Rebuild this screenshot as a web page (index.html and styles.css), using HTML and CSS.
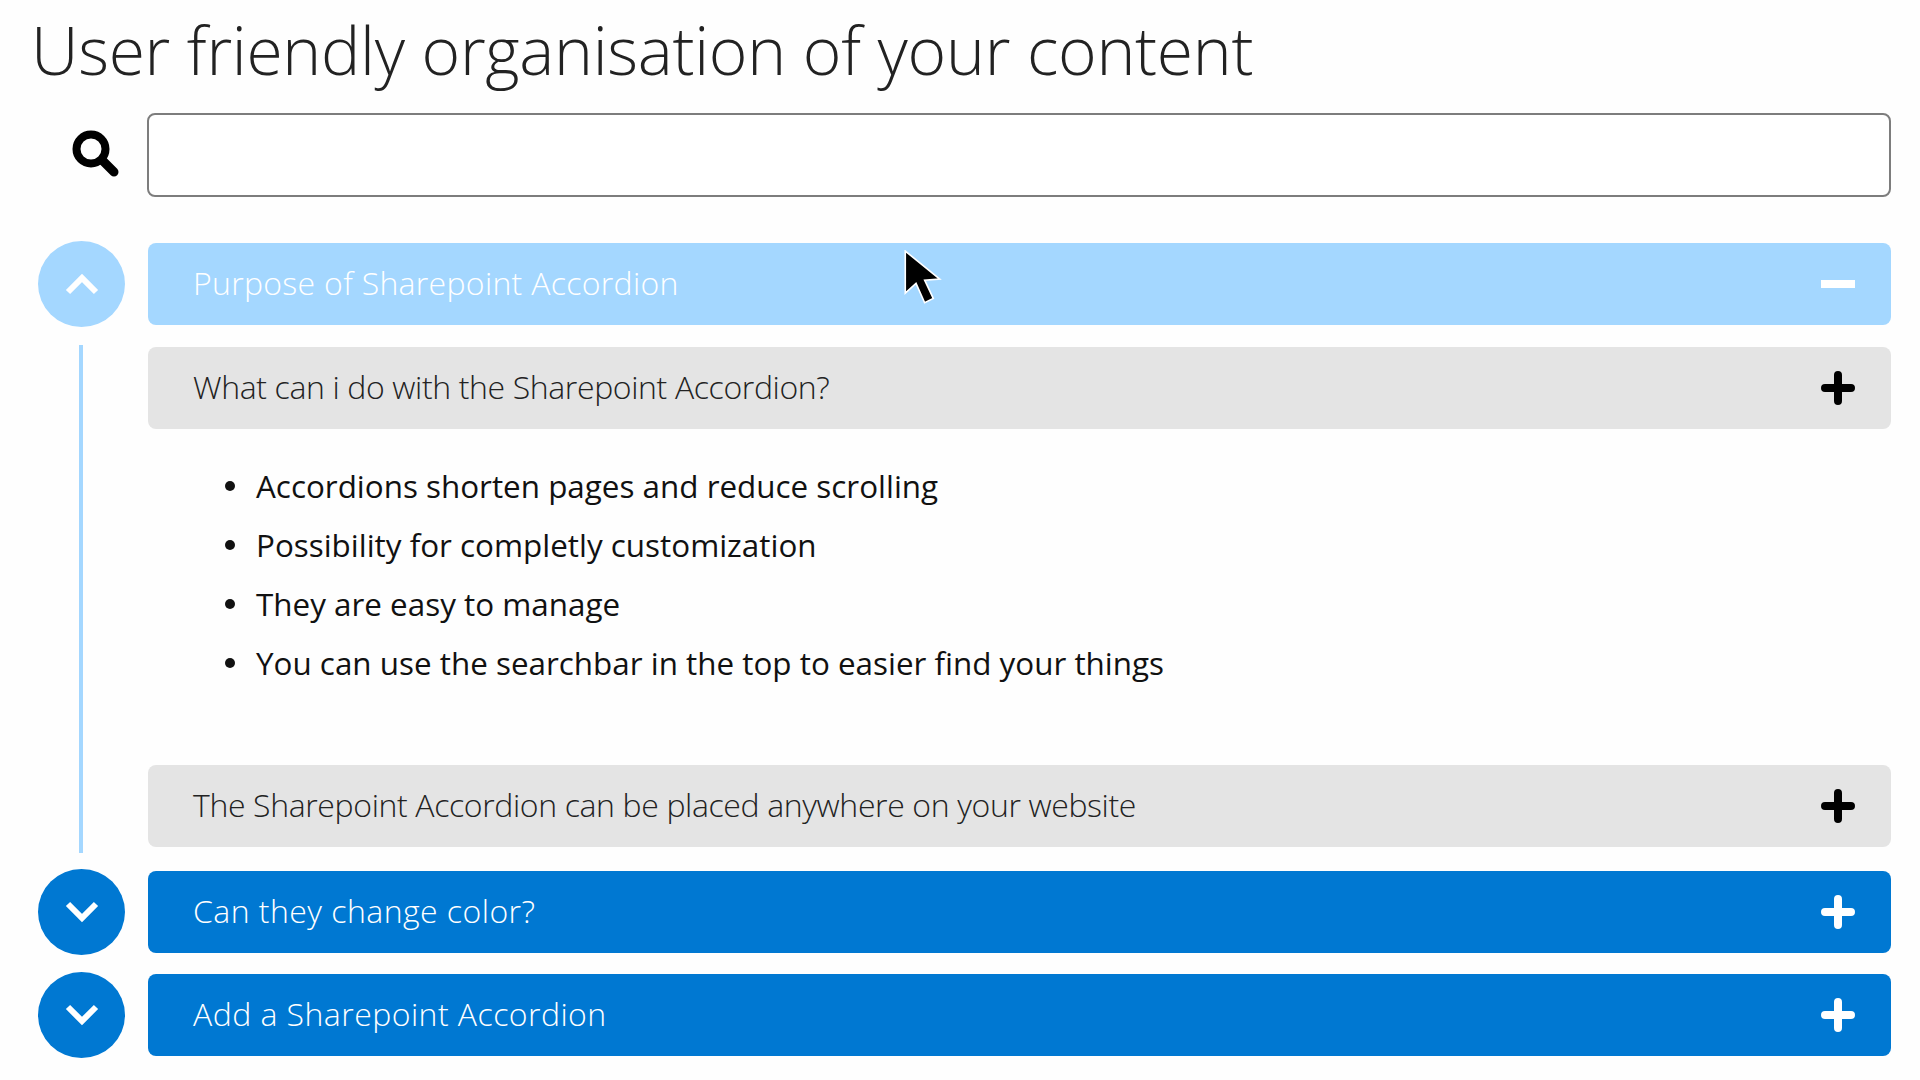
FILE: index.html
```html
<!DOCTYPE html>
<html lang="en">

<head>
    <meta charset="UTF-8">
    <title>User friendly organisation of your content</title>
    <link rel="stylesheet" href="styles.css">
</head>

<body>
    <h1 class="title">User friendly organisation of your content</h1>

    <div class="search">
        <svg class="search-icon" viewBox="0 0 50 48">
            <circle cx="20" cy="20" r="14.5" fill="none" stroke="#000" stroke-width="8" />
            <path d="M31 31 L43 43" fill="none" stroke="#000" stroke-width="9" stroke-linecap="round" />
        </svg>
        <input class="search-input" type="text">
    </div>

    <div class="acc acc-first">
        <div class="round round-open">
            <svg class="chevron" viewBox="0 0 34 22">
                <path d="M3 19 L17 5 L31 19" />
            </svg>
        </div>
        <div class="bar bar-open">
            <span>Purpose of Sharepoint Accordion</span>
            <svg class="sign" viewBox="0 0 34 34">
                <path d="M0 17 H34" stroke="#fff" stroke-width="8" />
            </svg>
        </div>
    </div>

    <div class="panel">
        <div class="rail"></div>
        <div class="panel-items">
            <div class="bar bar-sub">
                <span>What can i do with the Sharepoint Accordion?</span>
                <svg class="sign" viewBox="0 0 34 34">
                    <path d="M4 17 H30 M17 4 V30" stroke="#000" stroke-width="8" stroke-linecap="round" />
                </svg>
            </div>
            <ul class="points">
                <li>Accordions shorten pages and reduce scrolling</li>
                <li>Possibility for completly customization</li>
                <li>They are easy to manage</li>
                <li>You can use the searchbar in the top to easier find your things</li>
            </ul>
            <div class="bar bar-sub">
                <span>The Sharepoint Accordion can be placed anywhere on your website</span>
                <svg class="sign" viewBox="0 0 34 34">
                    <path d="M4 17 H30 M17 4 V30" stroke="#000" stroke-width="8" stroke-linecap="round" />
                </svg>
            </div>
        </div>
    </div>

    <div class="acc acc-second">
        <div class="round">
            <svg class="chevron" viewBox="0 0 34 22">
                <path d="M3 3 L17 17 L31 3" />
            </svg>
        </div>
        <div class="bar">
            <span>Can they change color?</span>
            <svg class="sign" viewBox="0 0 34 34">
                <path d="M4 17 H30 M17 4 V30" stroke="#fff" stroke-width="8" stroke-linecap="round" />
            </svg>
        </div>
    </div>

    <div class="acc acc-third">
        <div class="round">
            <svg class="chevron" viewBox="0 0 34 22">
                <path d="M3 3 L17 17 L31 3" />
            </svg>
        </div>
        <div class="bar">
            <span>Add a Sharepoint Accordion</span>
            <svg class="sign" viewBox="0 0 34 34">
                <path d="M4 17 H30 M17 4 V30" stroke="#fff" stroke-width="8" stroke-linecap="round" />
            </svg>
        </div>
    </div>

    <svg class="cursor" viewBox="0 0 36 52">
        <path d="M2 1 L2 40 L12 31 L20 49 L28 45 L20 28 L34 27 Z" fill="#000" stroke="#fff" stroke-width="1.5" />
    </svg>
</body>

</html>
```

FILE: styles.css
```css
html,
body {
    height: 100%;
}

body {
    position: relative;
    margin: 0;
    padding: 0 29px 0 0;
    overflow: hidden;
    background-color: #fefefe;
    color: #111;
    font-family: "Open Sans", "Noto Sans", sans-serif;
}

.title {
    margin: 0;
    padding: 7px 0 0 31px;
    height: 113px;
    box-sizing: border-box;
    font-size: 66px;
    font-weight: 300;
    line-height: 84px;
    letter-spacing: -0.29px;
    white-space: nowrap;
    color: #222;
}

/* search row */
.search {
    display: grid;
    grid-template-columns: 147px 1fr;
    height: 84px;
}

.search-icon {
    width: 50px;
    height: 48px;
    margin: 16px 0 0 71px;
}

.search-input {
    height: 84px;
    width: 100%;
    box-sizing: border-box;
    border: 2px solid #7d7d7d;
    border-radius: 8px;
    background-color: #fff;
}

/* accordion */
.acc {
    display: grid;
    grid-template-columns: 148px 1fr;
}

.acc-first {
    margin-top: 46px;
}

.acc-second {
    margin-top: 24px;
}

.acc-third {
    margin-top: 21px;
}

.round {
    display: flex;
    align-items: center;
    justify-content: center;
    width: 87px;
    height: 86px;
    margin: -2px 0 -2px 38px;
    border-radius: 50%;
    background-color: #0078d2;
}

.round-open {
    background-color: #a4d7ff;
}

.chevron {
    width: 34px;
    height: 22px;
    fill: none;
    stroke: #fff;
    stroke-width: 6;
}

.bar {
    display: flex;
    align-items: center;
    justify-content: space-between;
    height: 82px;
    padding: 0 36px 0 45px;
    border-radius: 8px;
    background-color: #0078d2;
    color: #fff;
    font-size: 32px;
    font-weight: 300;
    letter-spacing: 0.45px;
}

.bar span {
    margin-bottom: 3px;
}

.bar-open {
    background-color: #a4d7ff;
    letter-spacing: 0.3px;
}

.bar-sub {
    background-color: #e4e4e4;
    color: #222;
    letter-spacing: -0.37px;
}

.sign {
    width: 34px;
    height: 34px;
    flex-shrink: 0;
}

.panel {
    display: grid;
    grid-template-columns: 148px 1fr;
    margin-top: 22px;
}

.rail {
    width: 4px;
    margin: -2px 0 -6px 79px;
    background-color: #a4d7ff;
}

.points {
    height: 336px;
    margin: 0;
    padding: 27px 0 0 77px;
    box-sizing: border-box;
    list-style: none;
    font-size: 31.4px;
    line-height: 59px;
    color: #111;
}

.points li {
    display: flex;
    align-items: center;
    gap: 21px;
}

.points li::before {
    content: "";
    width: 10px;
    height: 10px;
    border-radius: 50%;
    background-color: #111;
}

/* pointer from the recording */
.cursor {
    position: absolute;
    left: 903px;
    top: 250px;
    width: 39px;
    height: 56px;
    filter: blur(0.5px);
}
```
